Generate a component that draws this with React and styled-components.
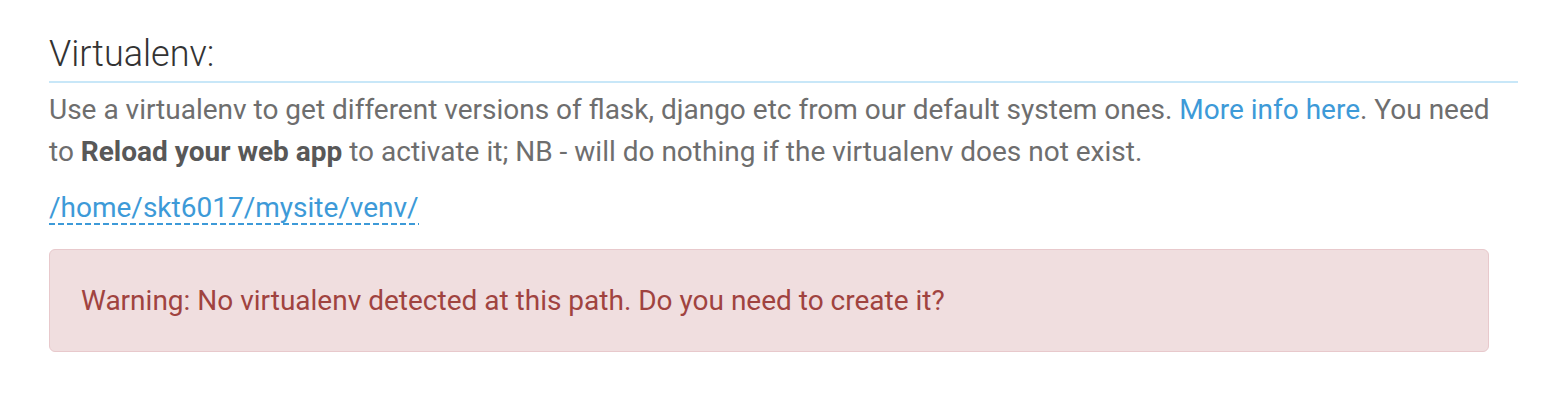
import styled, { createGlobalStyle } from "styled-components";

const GlobalStyle = createGlobalStyle`
  body {
    margin: 0;
    background: #fff;
    font-family: Roboto, "Liberation Sans", sans-serif;
  }
`;

function App() {
  return (
    <>
      <GlobalStyle />
      <Section>
        <Heading>Virtualenv:</Heading>
        <Text>
          Use a virtualenv to get different versions of flask, django etc from our default system
          ones. <Link href="#">More info here</Link>. You need to <strong>Reload your web app</strong> to
          activate it; NB - will do nothing if the virtualenv does not exist.
        </Text>
        <PathRow>
          <Editable>/home/skt6017/mysite/venv/</Editable>
        </PathRow>
        <Alert>Warning: No virtualenv detected at this path. Do you need to create it?</Alert>
      </Section>
    </>
  );
}

export default App;

const Section = styled.section`
  padding: 35px 36px 40px 49px;
`;

const Heading = styled.h3`
  margin: 0;
  padding-bottom: 6px;
  border-bottom: 2px solid #c8e7f8;
  font-size: 36px;
  font-weight: 300;
  line-height: 39.6px;
  color: #333;
`;

const Text = styled.p`
  margin: 6px 0 0;
  font-size: 28px;
  line-height: 42px;
  color: #6e6e6e;

  strong {
    font-weight: 700;
    color: #585858;
  }
`;

const Link = styled.a`
  color: #3d9ad8;
  text-decoration: none;
`;

const PathRow = styled.div`
  display: flex;
  margin-top: 20px;
`;

const Editable = styled.span`
  padding-bottom: 3px;
  font-size: 28px;
  line-height: 30px;
  color: #3d9ad8;
  background-image: repeating-linear-gradient(
    to right,
    #3d9ad8 0,
    #3d9ad8 6px,
    transparent 6px,
    transparent 9px
  );
  background-size: 100% 2px;
  background-position: left bottom 1px;
  background-repeat: no-repeat;
`;

const Alert = styled.div`
  margin: 23px 29px 0 0;
  padding: 30px 31px;
  border: 1px solid #e8c9cc;
  border-radius: 6px;
  background: #f0dedf;
  font-size: 28px;
  line-height: 41px;
  color: #a0433f;
`;
